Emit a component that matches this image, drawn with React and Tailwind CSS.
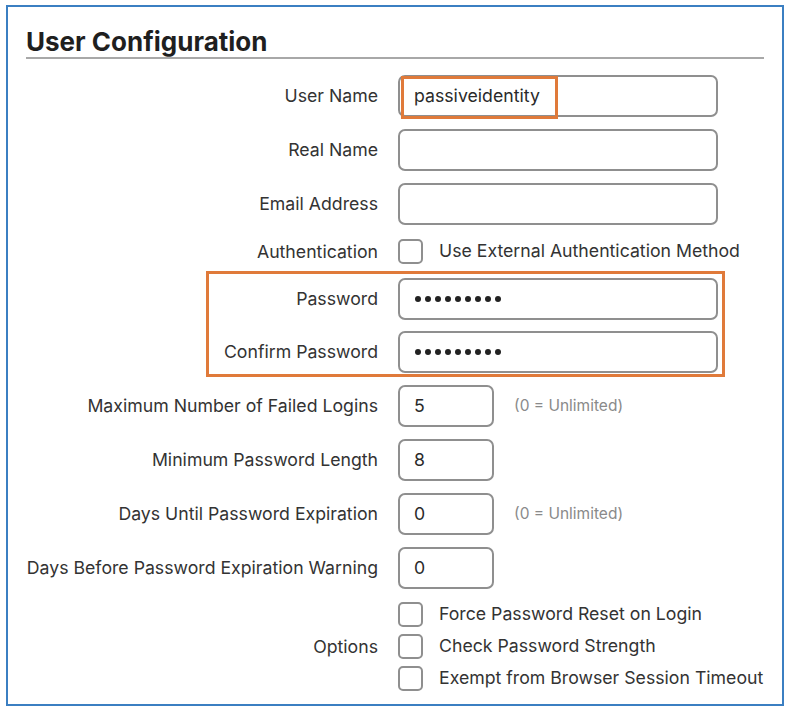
import React from "react";

const font = { fontFamily: "Inter, 'Noto Sans', 'Liberation Sans', sans-serif" };

function Label({ children }) {
  return (
    <div className="w-[352px] shrink-0 whitespace-nowrap text-right text-[17.7px] text-[#333333] leading-none">
      {children}
    </div>
  );
}

function TextBox({ value, wide = true, highlight = false, dots = false }) {
  return (
    <div
      className={`relative h-[42px] ${wide ? "w-[320px]" : "w-[96px]"} shrink-0 rounded-[7px] border-2 border-[#8f8f8f] bg-white flex items-center pl-[14px] text-[17.7px] text-[#2a2a2a]`}
    >
      {dots ? (
        <div className="flex gap-[4px] pl-[1px]">
          {Array.from({ length: 9 }).map((_, i) => (
            <span key={i} className="block w-[6px] h-[6px] rounded-full bg-[#222]" />
          ))}
        </div>
      ) : (
        <span>{value}</span>
      )}
      {highlight && (
        <div className="absolute left-[1px] top-[-1px] w-[157px] h-[43px] border-[3px] border-[#e07a3a]" />
      )}
    </div>
  );
}

function Check() {
  return <div className="w-[25px] h-[25px] shrink-0 rounded-[5px] border-2 border-[#8f8f8f] bg-white" />;
}

function Row({ label, children, h = "h-[42px]" }) {
  return (
    <div className={`flex items-center gap-[20px] ${h}`}>
      <Label>{label}</Label>
      {children}
    </div>
  );
}

function CheckItem({ text }) {
  return (
    <div className="flex items-center gap-[16px] h-[25px]">
      <Check />
      <span className="whitespace-nowrap text-[17.7px] text-[#333333]">{text}</span>
    </div>
  );
}

export default function App() {
  return (
    <div className="w-[790px] h-[713px] bg-white pt-[5px] pl-[6px]" style={font}>
      <div className="w-[778px] h-[701px] border-2 border-[#3b7fc2] px-[18px] pt-[20px]">
        <h1 className="text-[26px] leading-[30px] font-bold text-[#1f1f1f] border-b-2 border-[#a8a8a8]">
          User Configuration
        </h1>

        <div className="mt-[16px] flex flex-col gap-[12px]">
          <Row label="User Name">
            <TextBox value="passiveidentity" highlight />
          </Row>
          <Row label="Real Name">
            <TextBox value="" />
          </Row>
          <Row label="Email Address">
            <TextBox value="" />
          </Row>
          <Row label="Authentication" h="h-[29px]">
            <CheckItem text="Use External Authentication Method" />
          </Row>

          <div className="relative flex flex-col gap-[11px]">
            <div className="absolute left-[180px] top-[-7px] w-[519px] h-[106px] border-[3px] border-[#e07a3a] pointer-events-none" />
            <Row label="Password">
              <TextBox dots />
            </Row>
            <Row label="Confirm Password">
              <TextBox dots />
            </Row>
          </div>

          <Row label="Maximum Number of Failed Logins">
            <TextBox value="5" wide={false} />
            <span className="whitespace-nowrap text-[15.5px] text-[#8a8a8a]">(0 = Unlimited)</span>
          </Row>
          <Row label="Minimum Password Length">
            <TextBox value="8" wide={false} />
          </Row>
          <Row label="Days Until Password Expiration">
            <TextBox value="0" wide={false} />
            <span className="whitespace-nowrap text-[15.5px] text-[#8a8a8a]">(0 = Unlimited)</span>
          </Row>
          <Row label="Days Before Password Expiration Warning">
            <TextBox value="0" wide={false} />
          </Row>

          <div className="mt-[1px] flex items-center gap-[20px]">
            <Label>Options</Label>
            <div className="flex flex-col gap-[7px]">
              <CheckItem text="Force Password Reset on Login" />
              <CheckItem text="Check Password Strength" />
              <CheckItem text="Exempt from Browser Session Timeout" />
            </div>
          </div>
        </div>
      </div>
    </div>
  );
}
